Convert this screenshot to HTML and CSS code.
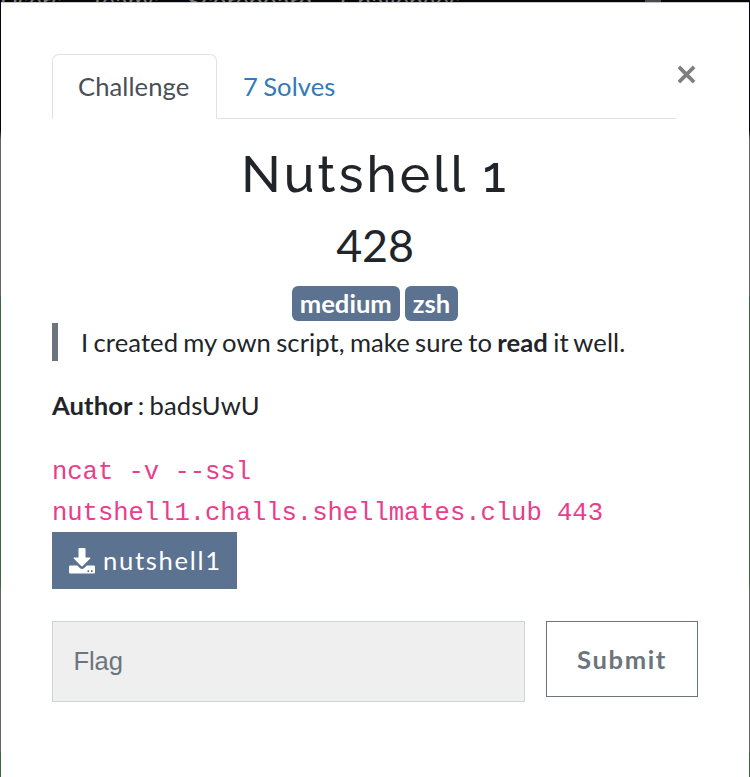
FILE: index.html
```html
<!DOCTYPE html>
<html lang="en">
<head>
<meta charset="utf-8">
<title>Nutshell 1</title>
<link rel="stylesheet" href="styles.css">
</head>
<body>
<div class="navbar"><span>Users</span><span>Teams</span><span>Scoreboard</span><span>Challenges</span><i class="nav-icon"></i></div>
<main class="modal">
  <header class="top">
    <nav class="tabs">
      <a class="tab active">Challenge</a>
      <a class="tab">7 Solves</a>
    </nav>
    <button class="close" aria-label="Close"><svg viewBox="0 0 20 20"><path d="M2 2 18 18M18 2 2 18"/></svg></button>
  </header>
  <h2 class="name">Nutshell 1</h2>
  <h3 class="value">428</h3>
  <div class="tags"><span class="tag">medium</span><span class="tag">zsh</span></div>
  <blockquote class="quote">I created my own script, make sure to <b>read</b> it well.</blockquote>
  <p class="author"><b>Author</b> : badsUwU</p>
  <p class="command"><code>ncat -v --ssl nutshell1.challs.shellmates.club 443</code></p>
  <a class="file">
    <svg viewBox="0 0 26 26"><path fill="#fff" d="M10.3 0h5.4q.8 0 .8.8v8.7h4.3q1.2 0 .4 1L13.8 18q-.8.8-1.6 0L4.8 10.500q-.8-1 .4-1h4.300V.8q0-.8.8-.8z"/><path fill="#fff" fill-rule="evenodd" d="M1.200 17.500h7l2.600 2.600q2.200 1.800 4.400 0l2.600-2.600h7q1.200 0 1.200 1.200v5.600q0 1.200-1.200 1.200H1.200q-1.200 0-1.200-1.200v-5.600q0-1.200 1.200-1.200zm17.300 4.800v1.700h1.700v-1.700zm3.500 0v1.700h1.700v-1.700z"/></svg>
    <span>nutshell1</span>
  </a>
  <form class="answer">
    <input class="flag" type="text" placeholder="Flag">
    <button class="submit" type="button">Submit</button>
  </form>
</main>
</body>
</html>
```
FILE: styles.css
```css
* { box-sizing: border-box; }
body { margin: 0; height: 777px; overflow: hidden; background: linear-gradient(#05060d 0 130px, #666 140px 296px, #3f6545 297px 585px, #666 590px 752px, #3f6545 753px); color: #212529; font: 25.6px/38.4px Lato, sans-serif; letter-spacing: .08px; word-spacing: -1.4px; }
.navbar { height: 2px; overflow: hidden; display: flex; gap: 28px; line-height: 2px; color: #777; background: #05060a; font-size: 25px; }
.nav-icon { width: 16px; height: 2px; margin: 0 89px 0 auto; background: #4c484b; }
.modal { height: 775px; margin: 0 1px; padding: 51px 51px 0; border-top: 1px solid #c8c8c8; background: #fff; }
.top { display: flex; height: 65px; }
.tabs { display: flex; width: 624px; border-bottom: 1px solid #dee2e6; }
.tab { height: 65px; padding: 13px 26px; color: #337ab7; }
.tab.active { width: 165px; border: 1px solid #dee2e6; border-bottom-color: #fff; border-radius: 7px 7px 0 0; padding: 12px 25px; color: #495057; background: #fff; }
.close { width: 21px; height: 44px; padding: 0; border: 0; background: none; }
.close svg { width: 19px; height: 19px; fill: none; stroke: #7f7f7f; stroke-width: 3.8; }
.name { margin: 25px 0 0; text-align: center; font: 500 51.2px/61px Raleway, Lato, sans-serif; letter-spacing: 3px; word-spacing: 0; }
.value { margin: 13px 0 0; text-align: center; font: 400 44.8px/54px Lato, sans-serif; letter-spacing: -.2px; }
.tags { display: flex; justify-content: center; gap: 5px; margin-top: 14px; }
.tag { height: 35px; padding: 0 8px; border-radius: 6px; background: #5b7290; color: #fff; font-weight: 700; line-height: 35px; letter-spacing: 0; }
.quote { margin: 2px 0 26px; height: 38px; padding-left: 23px; border-left: 6px solid #6c757d; line-height: 38px; }
.author { margin: 0 0 29px; line-height: 36.4px; }
.command { height: 80px; margin: 0; }
code { display: block; color: #e83e8c; font: 25.6px/41px "Liberation Mono", monospace; letter-spacing: -.055px; word-spacing: 0; }
.file { display: flex; align-items: center; gap: 8px; width: 185px; height: 57px; padding-left: 17px; background: #5b7290; color: #fff; letter-spacing: 1.7px; }
.file span { padding-bottom: 2px; }
.file svg { width: 26px; height: 26px; }
.answer { display: flex; gap: 21px; margin-top: 32px; }
.flag { width: 473px; height: 81px; padding: 0 20.5px; border: 1px solid #ced4da; background: #efefef; font: 25.6px "Liberation Sans", sans-serif; letter-spacing: -.1px; }
.flag::placeholder { color: #6c757d; opacity: 1; }
.submit { width: 152px; height: 76px; padding: 0; border: 1px solid #6c757d; background: #fff; color: #6c757d; font: 700 25.6px Lato, sans-serif; letter-spacing: 1.6px; }
```
